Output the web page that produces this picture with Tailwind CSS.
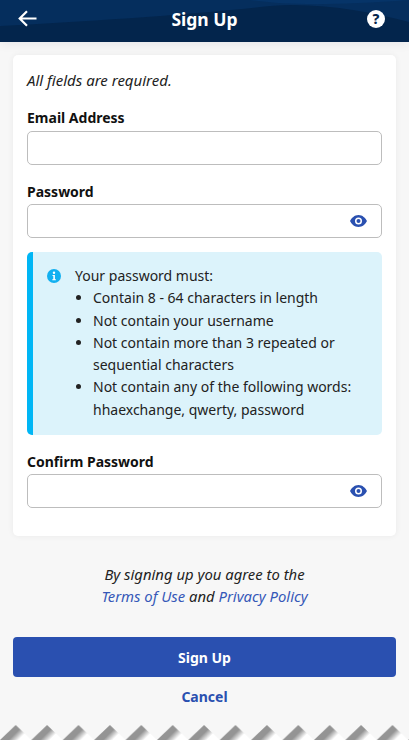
<!doctype html>
<html>
<head>
<meta charset="utf-8">
<script src="https://cdn.jsdelivr.net/npm/@tailwindcss/browser@4"></script>
</head>
<body class="m-0 bg-[#f7f7f7] font-['Noto_Sans','Open_Sans',sans-serif] text-[#222]">
<div class="relative h-[740px] w-[409px] overflow-hidden bg-[#f7f7f7]">
  <header class="relative grid h-[42px] grid-cols-[1fr_auto_1fr] items-center bg-[#03254c] pb-[5px] shadow-[0_2px_10px_rgba(0,0,50,0.07)]">
    <svg class="absolute inset-0" width="409" height="42" viewBox="0 0 409 42" fill="none"><path d="M0 26 C80 22 200 14 270 6 C320 2 370 12 409 22 V0 H0Z" fill="#052e5d"/><path d="M250 0 C290 6 340 5 409 0Z" fill="#063468"/></svg>
    <div class="relative flex pl-[18px]">
      <svg width="19" height="17" viewBox="0 0 19 17" fill="none" stroke="#fff" stroke-width="2.200"><path d="M18.500 8.500H2M9 1.200 1.700 8.500 9 15.800"/></svg>
    </div>
    <h1 class="relative text-[17.5px] leading-[24px] font-bold text-white">Sign Up</h1>
    <div class="relative flex justify-end pr-[24px]">
      <svg width="18" height="18" viewBox="0 0 18 18"><circle cx="9" cy="9" r="9" fill="#fff"/><text x="9" y="14" text-anchor="middle" font-size="14" font-weight="800" fill="#03254c" font-family="Noto Sans">?</text></svg>
    </div>
  </header>
  <main class="px-[13px] pt-[13px]">
    <section class="rounded-[5px] bg-white px-[14px] pt-[14px] pb-[28px] shadow-[0_0_6px_rgba(0,0,0,0.06)]">
      <p class="text-[15px] leading-[22px] italic">All fields are required.</p>
      <label class="mt-[17px] block text-[14px] leading-[20px] font-bold text-[#111]">Email Address</label>
      <div class="mt-[3px] h-[34px] rounded-[5px] border border-[#bdbdbd] bg-white"></div>
      <label class="mt-[17px] block text-[14px] leading-[20px] font-bold text-[#111]">Password</label>
      <div class="mt-[2px] flex h-[34px] items-center justify-end rounded-[5px] border border-[#bdbdbd] bg-white pr-[14px]">
        <svg width="17" height="12" viewBox="0 0 17 12"><path fill-rule="evenodd" fill="#2a50b0" d="M8.5 0C12.5 0 15.5 3 17 6c-1.500 3-4.500 6-8.500 6S1.500 9 0 6C1.500 3 4.500 0 8.500 0ZM8.500 2.500a3.500 3.500 0 1 0 0 7 3.500 3.500 0 0 0 0-7Z"/><circle cx="8.500" cy="6" r="2" fill="#2a50b0"/></svg>
      </div>
      <div class="mt-[14px] flex h-[183px] rounded-[5px] border-l-[6px] border-[#00b6f5] bg-[#dcf3fb] pt-[18px] pl-[14px] pr-[14px]">
        <svg class="mt-[-1px] shrink-0" width="14" height="14" viewBox="0 0 14 14"><circle cx="7" cy="7" r="7" fill="#12b0f0"/><circle cx="7" cy="3.700" r="1.200" fill="#fff"/><path d="M5.500 6h2.400v4.200h1v1.100H5.300v-1.100h1V7.100h-.8z" fill="#fff"/></svg>
        <div class="ml-[14px] text-[14px] leading-[22.300px] text-[#222]">
          <p class="mt-[-5px]">Your password must:</p>
          <ul class="list-disc pl-[18px]">
            <li>Contain 8 - 64 characters in length</li>
            <li>Not contain your username</li>
            <li>Not contain more than 3 repeated or sequential characters</li>
            <li>Not contain any of the following words: hhaexchange, qwerty, password</li>
          </ul>
        </div>
      </div>
      <label class="mt-[17px] block text-[14px] leading-[20px] font-bold text-[#111]">Confirm Password</label>
      <div class="mt-[2px] flex h-[34px] items-center justify-end rounded-[5px] border border-[#bdbdbd] bg-white pr-[14px]">
        <svg width="17" height="12" viewBox="0 0 17 12"><path fill-rule="evenodd" fill="#2a50b0" d="M8.5 0C12.5 0 15.5 3 17 6c-1.500 3-4.500 6-8.500 6S1.500 9 0 6C1.500 3 4.500 0 8.500 0ZM8.500 2.500a3.500 3.500 0 1 0 0 7 3.500 3.500 0 0 0 0-7Z"/><circle cx="8.500" cy="6" r="2" fill="#2a50b0"/></svg>
      </div>
    </section>
    <p class="mt-[27px] text-center text-[14.850px] leading-[22px] italic">By signing up you agree to the<br><a class="text-[#3558b8]">Terms of Use</a> and <a class="text-[#3558b8]">Privacy Policy</a></p>
    <button class="mt-[30px] block h-[40px] w-full rounded-[4px] bg-[#2a50b0] text-[14px] font-bold text-white">Sign Up</button>
    <p class="mt-[10px] text-center text-[14px] leading-[20px] font-bold text-[#2a50b0]">Cancel</p>
  </main>
  <svg class="absolute bottom-0 left-0" width="409" height="15" viewBox="0 0 409 15">
    <defs>
      <linearGradient id="g" gradientUnits="userSpaceOnUse" x1="8" y1="7.500" x2="17" y2="16.500"><stop offset="0.450" stop-color="#949494"/><stop offset="1" stop-color="#ffffff"/></linearGradient>
      <pattern id="z" width="31.400" height="15" patternUnits="userSpaceOnUse"><path d="M0 15 L15.700 0 L31.400 15Z" fill="url(#g)"/></pattern>
    </defs>
    <rect width="409" height="15" fill="url(#z)"/>
  </svg>
</div>
</body>
</html>
